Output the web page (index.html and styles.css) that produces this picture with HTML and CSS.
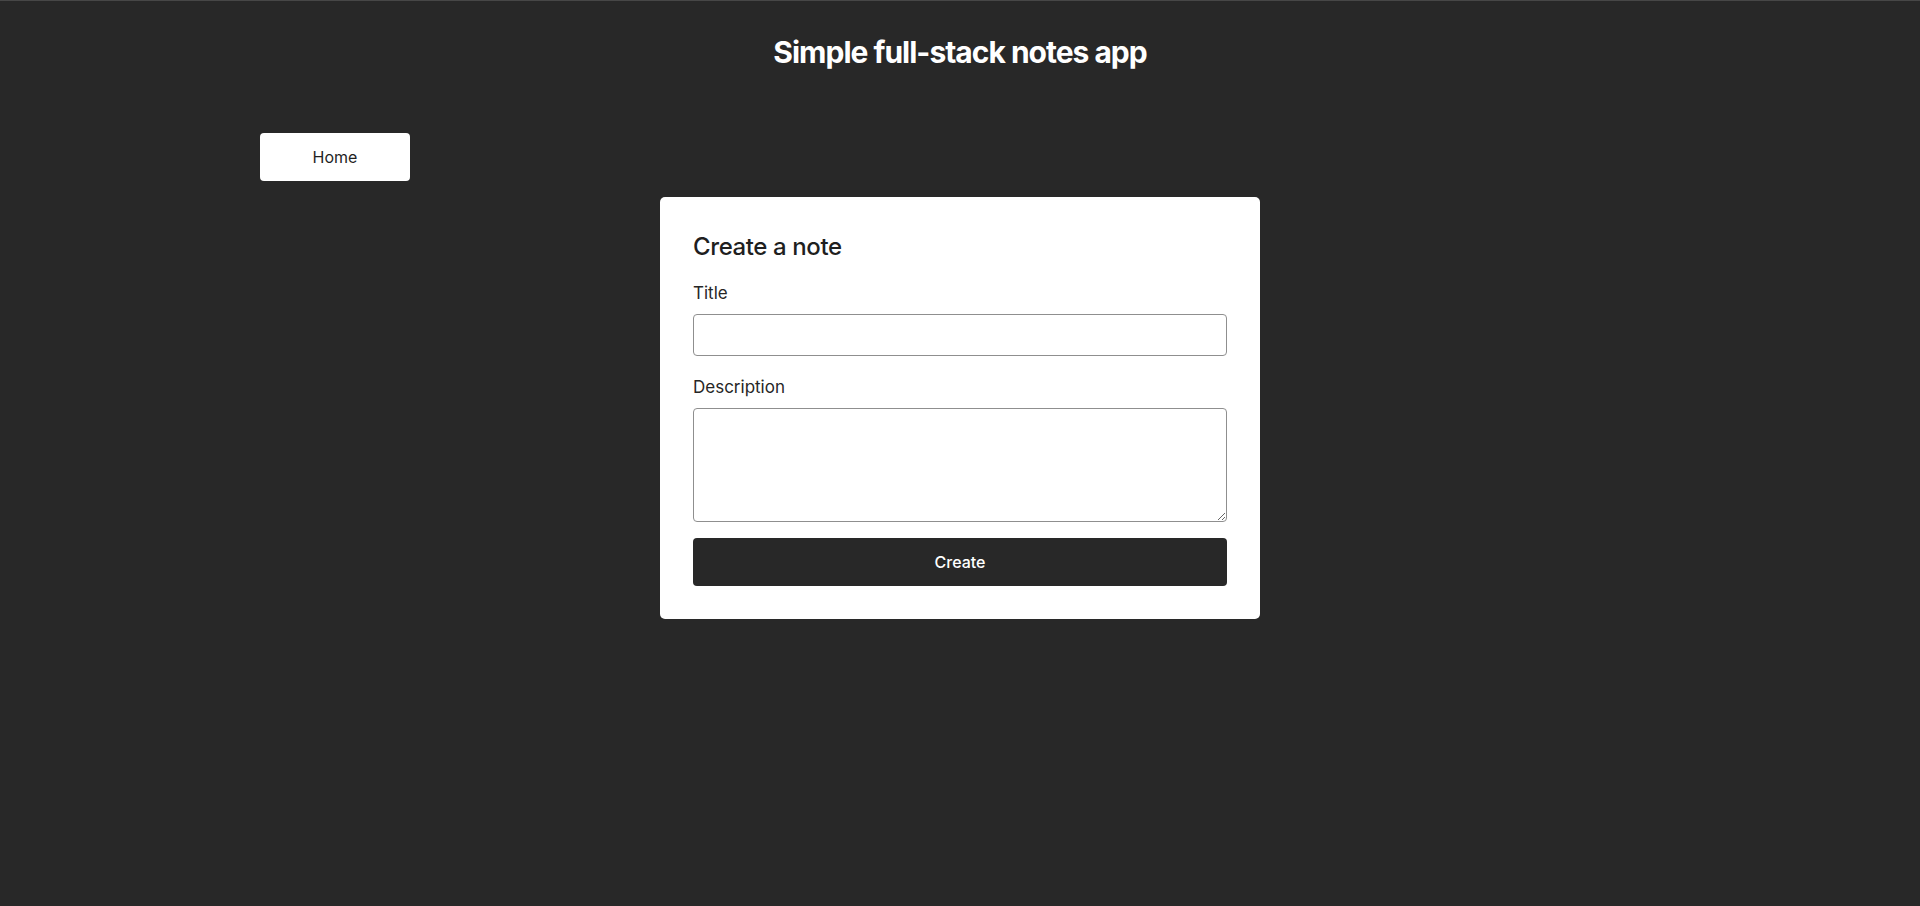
FILE: index.html
```html
<!DOCTYPE html>
<html lang="en">
<head>
<meta charset="utf-8">
<title>Simple full-stack notes app</title>
<link rel="stylesheet" href="styles.css">
</head>
<body>
  <header class="site-header">
    <h1 class="site-title">Simple full-stack notes app</h1>
  </header>
  <main class="container">
    <nav class="nav">
      <a class="nav-btn" href="#">Home</a>
    </nav>
    <section class="card">
      <h2 class="card-title">Create a note</h2>
      <div class="field">
        <label class="label" for="title">Title</label>
        <input class="input" id="title" type="text">
      </div>
      <div class="field">
        <label class="label" for="desc">Description</label>
        <textarea class="textarea" id="desc"></textarea>
      </div>
      <button class="submit" type="button">Create</button>
    </section>
  </main>
</body>
</html>
```

FILE: styles.css
```css
* { box-sizing: border-box; }
html, body { height: 100%; }
body {
  margin: 0;
  background: #282828;
  border-top: 1px solid #474747;
  font-family: Inter, "Noto Sans", "Liberation Sans", sans-serif;
  color: #1f1f1f;
}
.site-header {
  padding-top: 33px;
  text-align: center;
}
.site-title {
  margin: 0;
  font-size: 30px;
  line-height: 36px;
  font-weight: 700;
  letter-spacing: -1px;
  color: #ffffff;
}
.container {
  width: 1400px;
  margin: 63px auto 0;
}
.nav {
  display: flex;
}
.nav-btn {
  display: flex;
  align-items: center;
  justify-content: center;
  width: 150px;
  height: 48px;
  background: #ffffff;
  border-radius: 4px;
  color: #1f1f1f;
  text-decoration: none;
  font-size: 16px;
}
.card {
  width: 600px;
  margin: 16px auto 0;
  background: #ffffff;
  border-radius: 5px;
  padding: 34px 33px 33px;
}
.card-title {
  margin: 0 0 18px;
  font-size: 24px;
  line-height: 32px;
  font-weight: 500;
  letter-spacing: -0.4px;
  color: #1f1f1f;
}
.field {
  margin-bottom: 19px;
}
.field:last-of-type { margin-bottom: 16px; }
.label {
  display: block;
  font-size: 17px;
  line-height: 24px;
  margin-bottom: 9px;
  color: #262626;
}
.input, .textarea {
  display: block;
  width: 100%;
  border: 1px solid #8f8f8f;
  border-radius: 4px;
  background: #ffffff;
  font-family: inherit;
  font-size: 16px;
}
.input { height: 42px; }
.textarea { height: 114px; resize: vertical; }
.submit {
  display: block;
  width: 100%;
  height: 48px;
  border: none;
  border-radius: 4px;
  background: #282828;
  color: #ffffff;
  font-family: inherit;
  font-size: 16px;
  font-weight: 500;
}
```
